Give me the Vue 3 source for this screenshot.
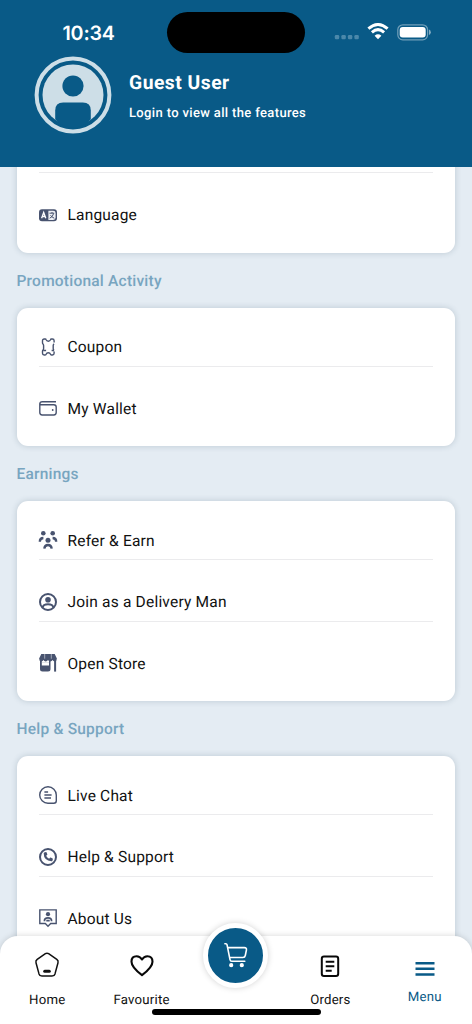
<script setup>
const sections = [
  { title: '', clipped: true, rows: [{ label: '', icon: '' }, { label: 'Language', icon: 'language' }] },
  { title: 'Promotional Activity', rows: [{ label: 'Coupon', icon: 'coupon' }, { label: 'My Wallet', icon: 'wallet' }] },
  {
    title: 'Earnings',
    rows: [
      { label: 'Refer & Earn', icon: 'refer' },
      { label: 'Join as a Delivery Man', icon: 'person' },
      { label: 'Open Store', icon: 'store' },
    ],
  },
  {
    title: 'Help & Support',
    rows: [
      { label: 'Live Chat', icon: 'chat' },
      { label: 'Help & Support', icon: 'phone' },
      { label: 'About Us', icon: 'about' },
      { label: '', icon: '' },
    ],
  },
]
</script>

<template>
  <div class="screen">
    <header class="header">
      <div class="status">
        <span class="time">10:34</span>
        <span class="island"></span>
        <span class="signals">
          <svg width="26" height="6" viewBox="0 0 26 6" class="dots">
            <rect x="0.8" y="1" width="4.4" height="4.2" rx="1.2" />
            <rect x="7.4" y="1" width="4.4" height="4.2" rx="1.2" />
            <rect x="13.9" y="1" width="4.4" height="4.2" rx="1.2" />
            <rect x="20.4" y="1" width="4.4" height="4.2" rx="1.2" />
          </svg>
          <svg width="22" height="17" viewBox="0 0 22 17" class="wifi">
            <path d="M1.4 5.7Q11 -2.6 20.6 5.7" />
            <path d="M4.9 9.3Q11 4 17.1 9.3" />
            <path class="solid" d="M11 16.2 7.6 12.7Q11 9.9 14.4 12.7Z" />
          </svg>
          <svg width="36" height="17" viewBox="0 0 36 17" class="battery">
            <rect x="0.8" y="0.8" width="29.8" height="15" rx="5" fill="none" stroke="#fff" stroke-opacity=".42" stroke-width="1.2" />
            <rect x="2.7" y="3" width="26" height="10.6" rx="3" fill="#fff" />
            <path d="M32 5.6q1.8.7 1.8 2.7t-1.8 2.7z" fill="#fff" fill-opacity=".5" />
          </svg>
        </span>
      </div>
      <div class="profile">
        <svg class="avatar" width="78" height="78" viewBox="0 0 78 78">
          <circle cx="39" cy="39" r="36.4" fill="none" stroke="#cddee7" stroke-width="4" />
          <circle cx="39" cy="39" r="30.5" fill="#cddee7" />
          <circle cx="39" cy="30" r="10.6" fill="#095a87" />
          <path d="M21.2 63.2V54.6q0-8 8-8h19.6q8 0 8 8V63.2Q50 71.5 39 71.5T21.2 63.2Z" fill="#095a87" />
        </svg>
        <div>
          <div class="name">Guest User</div>
          <div class="hint">Login to view all the features</div>
        </div>
      </div>
    </header>

    <main class="content">
      <section v-for="(section, i) in sections" :key="i" :class="{ clipped: section.clipped }">
        <h2 v-if="section.title">{{ section.title }}</h2>
        <div class="card">
          <div v-for="(row, r) in section.rows" :key="r" class="row">
            <div class="line">
              <svg v-if="row.icon" class="icon" width="20" height="20" viewBox="0 0 20 20">
                <template v-if="row.icon === 'language'">
                  <rect x="1" y="4.3" width="18" height="12" rx="3" class="fill" />
                  <path d="M10.4 5.7h4.8q2.4 0 2.4 2.4v4.4q0 2.4-2.4 2.4h-4.8z" fill="#eef0f5" />
                  <path d="M3.6 13.2 5.7 7.5 7.8 13.2M4.4 11.5H7" stroke="#fff" stroke-width="1.3" fill="none" />
                  <path d="M11.5 8.2h4.7M14 7v1.2M15.7 8.4q-1 3.7-4 4.8M12.5 10.2q1.6 2.4 3.8 3" class="stroke thin" />
                </template>
                <template v-else-if="row.icon === 'coupon'">
                  <path d="M10.3 4.2q1.7 0 2.1-1.3.2-.9 1.1-.9h.9q1.7 0 1.7 1.7v1.9M16.1 14.4v1.9q0 1.7-1.7 1.7h-.9q-.9 0-1.1-.9-.4-1.3-2.1-1.3t-2.1 1.3q-.2.9-1.1.9h-.9q-1.7 0-1.7-1.7v-2q0-.7.5-1.2.6-.6.6-1.6V8.500q0-1-.6-1.600-.5-.5-.5-1.200v-2Q4.500 2 6.200 2h.9q.9 0 1.100.9.400 1.300 2.100 1.300M16.100 6.800q-.9.500-.9 1.700v3q0 1.200.9 1.700M5.500 13.500h2.600M13.600 13.500h2.500" class="stroke" />
                </template>
                <template v-else-if="row.icon === 'wallet'">
                  <path d="M18 3.7H4.3Q1.8 3.7 1.8 5.8v8.8q0 2.4 2.4 2.4h11.6q2.4 0 2.4-2.4V9q0-2.3-2.4-2.3H3.4Q1.8 6.7 1.8 5.3" class="stroke" />
                  <circle cx="14.7" cy="12" r=".9" class="fill" />
                </template>
                <template v-else-if="row.icon === 'refer'">
                  <circle cx="5.3" cy="3.3" r="2.3" class="fill" />
                  <circle cx="14.7" cy="3.3" r="2.3" class="fill" />
                  <circle cx="10" cy="10.2" r="2.5" class="fill" />
                  <path d="M1.8 11.7q0-3.6 3.6-3.7M18.2 11.7q0-3.6-3.6-3.7M6.3 18.7q.3-3.7 3.7-3.7t3.7 3.7" class="stroke heavy" />
                </template>
                <template v-else-if="row.icon === 'person'">
                  <circle cx="10" cy="10" r="8" class="stroke mid" />
                  <circle cx="10" cy="7.7" r="2.8" class="fill" />
                  <path d="M4.7 15.5Q5.2 12.3 10 12.3t5.3 3.2" class="stroke mid" />
                </template>
                <template v-else-if="row.icon === 'store'">
                  <path d="M3.3.9h13.4l2.2 4.7q0 2.6-2.2 2.8-1.5 0-2.1-1.3-.8 1.3-2.3 1.3T10 7.1Q9.2 8.4 7.7 8.4T5.4 7.1Q4.8 8.4 3.3 8.4 1.1 8.2 1.1 5.6z" class="fill" />
                  <path d="M2 8h1.8v1.7h7.2V8h1.5v8.1q0 2.5-2.5 2.5H4.5Q2 18.6 2 16.1z" class="fill" />
                  <path d="M3.8 9.6h7.2v2.900H3.8z" fill="#fff" />
                  <path d="M17.1 7.5V18.6" class="stroke mid" />
                  <path d="M6.7 1v4.7M13.3 1v4.7" stroke="#dfe2e9" stroke-width=".6" />
                </template>
                <template v-else-if="row.icon === 'chat'">
                  <path d="M10 1.7a8.3 8.3 0 1 0 0 16.6h5.8q2.5 0 2.5-2.5V10A8.3 8.3 0 0 0 10 1.7Z" class="stroke" />
                  <path d="M6.4 7h3.7M6.4 10h7.2M6.4 13h6.6" class="stroke" />
                </template>
                <template v-else-if="row.icon === 'phone'">
                  <circle cx="10" cy="10" r="8" class="stroke mid" />
                  <path d="M6.2 5.5 7.9 5q.4-.1.6.3l.8 1.9q.2.4-.2.7l-1 .9q1 2.1 3 3l.9-1q.3-.4.7-.2l1.9.8q.4.2.3.6l-.5 1.7q-.1.5-.6.5Q9.8 14.3 7.7 12.1 5.7 10 5.7 6.2q0-.5.5-.7Z" class="fill" />
                </template>
                <template v-else>
                  <path d="M1.8 1.9h16.4v13.6h-5.5L10 18.3l-2.7-2.8H1.8z" class="stroke" />
                  <circle cx="10" cy="6.2" r="2.100" class="fill" />
                  <path d="M6.400 13.200q0-3.300 3.600-3.300t3.600 3.300M8.300 12.700h3.400" class="stroke bold" />
                </template>
              </svg>
              <span class="label">{{ row.label }}</span>
            </div>
          </div>
        </div>
      </section>
    </main>

    <nav class="tabs">
      <div class="tab">
        <svg width="28" height="28" viewBox="0 0 28 28">
          <path d="M12.4 2.7q1.6-1.1 3.2 0l8.2 5.7q1.8 1.3 1.2 3.4l-3 11.1q-.7 2.2-3 2.2H9q-2.3 0-3-2.2L3 11.8q-.6-2.1 1.2-3.4z" fill="none" stroke="#111" stroke-width="1.5" />
          <path d="M11.7 20.2h4.6" stroke="#111" stroke-width="3" stroke-linecap="round" />
        </svg>
        <span>Home</span>
      </div>
      <div class="tab">
        <svg width="28" height="28" viewBox="0 0 28 28">
          <path d="M14 24.1Q3.5 16.2 3.5 10.7 3.5 5.2 8.6 5.2q3.4 0 5.4 3.3 2-3.3 5.4-3.3 5.1 0 5.1 5.5 0 5.5-10.5 13.4Z" fill="none" stroke="#080808" stroke-width="2.1" stroke-linejoin="round" />
        </svg>
        <span>Favourite</span>
      </div>
      <div class="tab"></div>
      <div class="tab">
        <svg width="28" height="28" viewBox="0 0 28 28">
          <rect x="5.8" y="5.5" width="16.4" height="19.4" rx="2.2" fill="none" stroke="#080808" stroke-width="2" />
          <path d="M9.7 10.8h8.6M9.7 15.3h8.6M9.7 19.8h6" stroke="#080808" stroke-width="2" />
        </svg>
        <span>Orders</span>
      </div>
      <div class="tab active">
        <svg width="28" height="28" viewBox="0 0 28 28">
          <path d="M4.5 12.2h19M4.5 17.8h19M4.5 23.5h19" stroke="#095a87" stroke-width="2.6" />
        </svg>
        <span>Menu</span>
      </div>
      <div class="cart">
        <svg width="28" height="28" viewBox="0 0 28 28" fill="none" stroke="#fff" stroke-width="1.6" stroke-linecap="round" stroke-linejoin="round">
          <path d="M2.9 2.7h1q.9 0 1.1 1L8 18.6q.3 1.6 1.7 1.6h13.1M5.6 6.6h16.7q2.6 0 2.1 2.5l-1.1 5.4q-.4 2-2.4 2H7.6" />
          <circle cx="9.2" cy="24.2" r="1.3" fill="#fff" />
          <circle cx="19.8" cy="24.2" r="1.3" fill="#fff" />
        </svg>
      </div>
      <span class="home-bar"></span>
    </nav>
  </div>
</template>

<style scoped>
.screen {
  position: relative;
  display: flex;
  flex-direction: column;
  width: 472px;
  height: 1024px;
  overflow: hidden;
  background: #e4ecf3;
  font-family: Roboto, sans-serif;
  text-rendering: geometricPrecision;
}
.header {
  flex: none;
  height: 167px;
  background: #095a87;
  color: #fff;
}
.status {
  display: grid;
  grid-template-columns: 167px 138px 1fr;
  height: 56px;
}
.time {
  padding: 21px 0 0 62.5px;
  font: 600 19.7px/24px Inter, sans-serif;
  letter-spacing: -0.2px;
}
.island {
  height: 41px;
  margin-top: 12px;
  border-radius: 21px;
  background: #000;
}
.signals {
  display: flex;
  align-items: flex-start;
  padding: 23px 0 0 29px;
}
.dots {
  margin-top: 11px;
  fill: #4b88aa;
}
.wifi {
  margin-left: 6.5px;
  fill: none;
  stroke: #fff;
  stroke-width: 3;
}
.wifi .solid {
  fill: #fff;
  stroke: none;
}
.battery {
  margin: 0.5px 0 0 8px;
}
.profile {
  display: flex;
  gap: 17.5px;
  padding-left: 33.5px;
}
.name {
  margin-top: 14px;
  font-size: 19.3px;
  font-weight: 700;
  line-height: 25px;
  letter-spacing: 0.5px;
}
.hint {
  margin-top: 9.5px;
  font-size: 13px;
  font-weight: 500;
  line-height: 18px;
  letter-spacing: 0.35px;
}
.content {
  flex: 1;
  min-height: 0;
  overflow: hidden;
  padding: 0 17px 0 16.5px;
}
.clipped {
  margin-top: -52.6px;
}
h2 {
  height: 55px;
  margin: 0;
  color: #78a5c0;
  font-size: 15.5px;
  font-weight: 500;
  line-height: 56px;
  letter-spacing: 0.22px;
}
.card {
  padding: 7.75px 22px;
  border-radius: 11px;
  background: #fff;
  box-shadow: 0 0 6px rgba(30, 60, 80, 0.2);
}
.row {
  height: 61.5px;
  padding-top: 10.5px;
  box-sizing: border-box;
}
.line {
  display: flex;
  align-items: center;
  height: 39.8px;
  border-bottom: 1px solid #ebebed;
}
.row:last-child .line {
  border-color: transparent;
}
.icon {
  margin: 1px 0 0 -1px;
}
.fill {
  fill: #48536f;
}
.stroke {
  fill: none;
  stroke: #48536f;
  stroke-width: 1.4;
}
.stroke.thin {
  stroke-width: 1;
}
.stroke.bold {
  stroke-width: 1.7;
}
.stroke.mid {
  stroke-width: 2;
}
.stroke.heavy {
  stroke-width: 2.3;
}
.label {
  margin: 2px 0 0 10px;
  color: #111;
  font-size: 15.5px;
  letter-spacing: 0.2px;
}
.tabs {
  position: absolute;
  inset: 936px 0 0;
  display: grid;
  grid-template-columns: repeat(5, 1fr);
  border-radius: 18px 18px 0 0;
  background: #fff;
  box-shadow: 0 0 6px rgba(0, 0, 0, 0.16);
}
.tab {
  display: flex;
  flex-direction: column;
  align-items: center;
  padding-top: 15px;
  color: #111;
  font-size: 13.2px;
  line-height: 18px;
  letter-spacing: 0.2px;
}
.tab span {
  margin-top: 13px;
}
.tab.active {
  color: #095a87;
}
.tab.active span {
  margin-top: 10px;
}
.cart {
  position: absolute;
  left: 203px;
  top: -13.5px;
  display: grid;
  place-items: center;
  width: 55px;
  height: 55px;
  border: 5.5px solid #fff;
  border-radius: 50%;
  background: #095a87;
  box-shadow: 0 0 6px rgba(0, 0, 0, 0.18);
}
.home-bar {
  position: absolute;
  left: 151.5px;
  bottom: 9px;
  width: 169px;
  height: 6px;
  border-radius: 3px;
  background: #000;
}
</style>
